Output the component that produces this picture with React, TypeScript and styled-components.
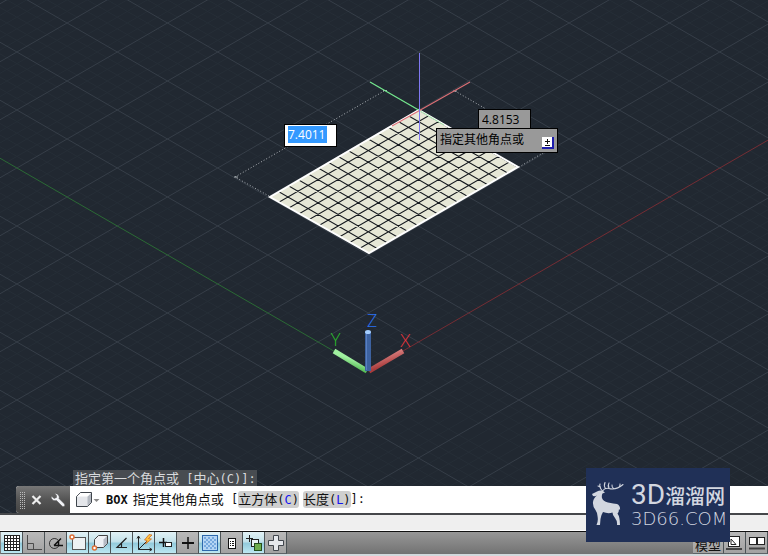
import React from "react";
import styled, { createGlobalStyle, css } from "styled-components";

const GlobalStyle = createGlobalStyle`
  *, *::before, *::after { box-sizing: border-box; }
  body {
    margin: 0;
    background: #212831;
    font-family: "Open Sans", "Noto Sans CJK SC", sans-serif;
  }
  button, input { font: inherit; color: inherit; margin: 0; }
`;

const Page = styled.div`
  display: flex;
  flex-direction: column;
  min-height: 100vh;
  position: relative;
  overflow: hidden;
`;

const Workspace = styled.main`
  position: relative;
  flex: 1;
  display: flex;
  flex-direction: column;
  justify-content: flex-end;
  align-items: flex-start;
  overflow: hidden;
  background: #212831;
  border-bottom: 2px solid #45474a;
`;

const SceneSvg = styled.svg`
  position: absolute;
  inset: 0;
  width: 100%;
  height: 100%;
`;

const AxisLabel = styled.text`
  font-family: "Lato", sans-serif;
  font-weight: 300;
  font-size: 17px;
`;

const floating = css<{ $x: number; $y: number }>`
  position: absolute;
  left: ${(p) => p.$x}px;
  top: ${(p) => p.$y}px;
  border: 1px solid #000;
  font-size: 12px;
  line-height: 16px;
`;

const Dimension = styled.label<{ $x: number; $y: number; $active?: boolean }>`
  ${floating}
  width: 53px;
  padding: ${(p) => (p.$active ? "1px 3px 3px" : "0 3px 2px")};
  background: ${(p) => (p.$active ? "#fff" : "#999")};
`;

const DimensionInput = styled.input<{ $active?: boolean }>`
  display: block;
  width: 39px;
  height: ${(p) => (p.$active ? 17 : 18)}px;
  padding: 0;
  border: 0;
  outline: 0;
  background: ${(p) => (p.$active ? "#3399ff" : "transparent")};
  color: ${(p) => (p.$active ? "#fff" : "#000")};
`;

const Prompt = styled.div<{ $x: number; $y: number }>`
  ${floating}
  display: flex;
  align-items: center;
  justify-content: space-between;
  width: 122px;
  height: 25px;
  padding: 0 3px 2px;
  background: #999;
  color: #000;
`;

const OptionsButton = styled.button`
  display: block;
  width: 12px;
  height: 12px;
  padding: 0;
  margin-top: 6px;
  border: 0;
  background: none;
  svg { display: block; }
`;

const History = styled.output`
  position: relative;
  margin-left: 73px;
  padding: 0 1px 0 2px;
  height: 16px;
  line-height: 16px;
  font-size: 13px;
  white-space: pre;
  background: #484c51;
  color: #d8dadc;
`;

const Mono = styled.span<{ $bold?: boolean; $color?: string }>`
  font-family: "DejaVu Sans Mono", monospace;
  font-size: 12px;
  font-weight: ${(p) => (p.$bold ? 700 : 400)};
  color: ${(p) => p.$color ?? "inherit"};
`;

const CommandBar = styled.section`
  position: relative;
  display: flex;
  align-self: stretch;
  height: 27px;
  margin-left: 16px;
  background: #fff;
  border-radius: 3px 0 0 3px;
  overflow: hidden;
`;

const CommandTools = styled.div`
  display: flex;
  align-items: center;
  width: 54px;
  padding-left: 4px;
  gap: 5px;
  background: linear-gradient(#777, #555 50%, #444);
`;

const ToolButton = styled.button`
  display: flex;
  padding: 0;
  border: 0;
  background: none;
`;

const CommandLine = styled.div`
  display: flex;
  align-items: center;
  padding-left: 4px;
  font-size: 13px;
  line-height: 17px;
  white-space: pre;
  color: #111;
`;

const RecentButton = styled(ToolButton)`
  margin-right: 6px;
`;

const CommandName = styled.strong`
  margin-right: 5px;
`;

const OptionChip = styled.button`
  height: 17px;
  padding: 0;
  border: 0;
  border-radius: 3px;
  background: #cfcfcf;
  line-height: 17px;
  & + & { margin-left: 4px; }
`;

const Tray = styled.div`
  height: 16px;
  background: #efefef;
  border-bottom: 1px solid #fff;
`;

const StatusBar = styled.footer`
  display: flex;
  justify-content: space-between;
  height: 25px;
  padding-left: 1px;
  border-top: 1px solid #111;
  border-bottom: 2px solid #d3d9dd;
  background: linear-gradient(#979797, #727272);
`;

const StatusGroup = styled.div`
  display: flex;
`;

const StatusButton = styled.button<{ $on?: boolean; $wide?: boolean }>`
  display: flex;
  align-items: center;
  justify-content: center;
  width: ${(p) => (p.$wide ? 31 : 22)}px;
  height: 22px;
  padding: ${(p) => (p.$wide ? "4px 0 0" : "0")};
  border: 0;
  border-right: 1px solid #4c5356;
  border-bottom: 1px solid #5d6366;
  font-size: 13px;
  line-height: 18px;
  white-space: nowrap;
  color: #111;
  background: ${(p) =>
    p.$on
      ? "linear-gradient(#e2f2f6, #c3e2ea 45%, #93cbdc 55%, #bde8f2)"
      : "linear-gradient(#b9b9b9, #a2a2a2)"};
  svg { display: block; }
`;

const Brand = styled.aside`
  position: absolute;
  right: 38px;
  bottom: 14px;
  display: flex;
  align-items: center;
  gap: 7px;
  width: 144px;
  height: 74px;
  padding-left: 5px;
  background: #203057;
  color: #d3d7e0;
`;

const BrandText = styled.div`
  display: flex;
  flex-direction: column;
  white-space: nowrap;
`;

const BrandName = styled.div`
  display: flex;
  align-items: center;
  height: 28px;
  font-family: "Noto Sans CJK SC", sans-serif;
  font-size: 20px;
  font-weight: 500;
`;

const BrandLatin = styled.span`
  font-family: Roboto, sans-serif;
  font-size: 28px;
  font-weight: 400;
  line-height: 28px;
`;

const BrandDomain = styled.div`
  font-family: "DejaVu Sans", sans-serif;
  font-size: 18px;
  font-weight: 200;
  line-height: 20px;
`;

const ORIGIN = { x: 368.3, y: 371 };
const CELL = { x: 10.04, y: 5.8 };
const REACH = 200;

function gridPath(from: number, to: number, skip: (i: number) => boolean) {
  let d = "";
  for (let i = from; i <= to; i++) {
    if (skip(i)) continue;
    const cx = ORIGIN.x + i * CELL.x;
    const cy = ORIGIN.y - i * CELL.y;
    d += `M${cx - REACH * CELL.x} ${cy - REACH * CELL.y}L${cx + REACH * CELL.x} ${cy + REACH * CELL.y}`;
    const bx = ORIGIN.x - i * CELL.x;
    d += `M${bx + REACH * CELL.x} ${cy - REACH * CELL.y}L${bx - REACH * CELL.x} ${cy + REACH * CELL.y}`;
  }
  return d;
}

const MINOR = gridPath(-120, 120, (i) => i % 5 === 0);
const MAJOR = gridPath(-120, 120, (i) => i % 5 !== 0 || i === 0);
const MESH = gridPath(-40, 40, () => false);
const FACE = "419,110 518,167 369,253 270,197";

function Scene() {
  return (
    <SceneSvg role="img" aria-label="Isometric model view" fill="none">
      <defs>
        <clipPath id="face">
          <polygon points={FACE} />
        </clipPath>
        <linearGradient id="rodX" x1="0" y1="0" x2="0.5" y2="1">
          <stop offset="0.3" stopColor="#d98080" />
          <stop offset="0.8" stopColor="#a83c3c" />
        </linearGradient>
        <linearGradient id="rodY" x1="0.5" y1="0" x2="0" y2="1">
          <stop offset="0.3" stopColor="#a0f0a0" />
          <stop offset="0.8" stopColor="#3ba83b" />
        </linearGradient>
      </defs>
      <path d={MINOR} stroke="#262e37" />
      <path d={MAJOR} stroke="#363e48" />
      <path d="M368.3 371L-1000 -419.5" stroke="#2b6a35" />
      <path d="M368.3 371L1968 -553" stroke="#752d34" />

      <polygon points={FACE} fill="#e6e7d6" />
      <g clipPath="url(#face)">
        <path d={MESH} stroke="#15191f" strokeWidth="1.1" />
      </g>
      <polygon points={FACE} stroke="#fff" strokeWidth="2" />

      <path
        d="M269 196L235 177L385 90.5M455 91L486 109M519 167L548 150"
        stroke="#aeb3b8"
        strokeDasharray="1 2"
      />
      <path d="M383 90.500h4M453 91h4M234 177h4" stroke="#a9b0b4" />
      <path d="M370 82L419.500 110.500" stroke="#72e88c" strokeWidth="1.2" />
      <path d="M419.500 110.500L444 125" stroke="#a5e6ab" />
      <path d="M470 82L419.500 110.500L392 126" stroke="#dc6f75" strokeWidth="1.2" />
      <rect x="419" y="53" width="1" height="87" fill="#7f78f0" />

      <path d="M369 371L403 351" stroke="url(#rodX)" strokeWidth="5" />
      <path d="M367 371L334 351" stroke="url(#rodY)" strokeWidth="5" />
      <path d="M368 332V371" stroke="#3d62a0" strokeWidth="6" />
      <path d="M366.500 332V370" stroke="#587fc0" strokeWidth="1" />
      <ellipse cx="368" cy="332" rx="3" ry="2" fill="#a5ceff" />
      <AxisLabel x="330.500" y="346" fill="#2cc22c">Y</AxisLabel>
      <AxisLabel x="400" y="347" fill="#f0363f">X</AxisLabel>
      <AxisLabel x="367" y="327" fill="#2a72f5">Z</AxisLabel>
    </SceneSvg>
  );
}

const Icon = ({ children, w = 20 }: { children: React.ReactNode; w?: number }) => (
  <svg width={w} height="20" viewBox={`0 0 ${w} 20`} fill="none" stroke="#222" aria-hidden="true">
    {children}
  </svg>
);

const Cube = () => (
  <>
    <path d="M2.500 6.500L6.500 2.500H17.500V12.500L13.500 16.500H2.500Z" fill="#e4e6ea" stroke="#3f454c" strokeLinejoin="round" />
    <path d="M13.500 6.500L17 3V12.500L13.500 16Z" fill="#b4b9c1" stroke="none" />
    <path d="M3 6.500L6.500 3H17L13.500 6.500Z" fill="#fff" stroke="none" />
  </>
);

const toggles: { label: string; on?: boolean; art: React.ReactNode }[] = [
  {
    label: "Grid display",
    on: true,
    art: (
      <>
        <rect x="2.500" y="2.500" width="15" height="15" fill="#fff" />
        <path d="M5.500 2V18M8.500 2V18M11.500 2V18M14.500 2V18M2 5.500H18M2 8.500H18M2 11.500H18M2 14.500H18" />
      </>
    ),
  },
  { label: "Ortho mode", art: <path d="M3.500 2V16.500H18M3.500 10.500H9.500V16.500" stroke="#4b4b4b" /> },
  {
    label: "Polar tracking",
    art: (
      <>
        <path d="M12 7A5 5 0 1 0 13 12.500" stroke="#333" />
        <path d="M8 12.500L15 5.500M8 12.500H17M12.500 8.500V12" strokeWidth="1.500" stroke="#111" />
      </>
    ),
  },
  {
    label: "Object snap",
    on: true,
    art: (
      <>
        <rect x="4.500" y="4.500" width="13" height="12" fill="#edf1f3" stroke="#555" />
        <circle cx="4" cy="4" r="2" fill="#fff" stroke="#dd7038" strokeWidth="1.500" />
      </>
    ),
  },
  {
    label: "3D object snap",
    on: true,
    art: (
      <>
        <path d="M4.500 6.500L8.500 2.500H17.500V10.500L13.500 14.500H4.500Z" fill="#edf0f4" stroke="#444" />
        <path d="M13.500 6.500L17 3V10.500L13.500 14Z" fill="#b5bac4" stroke="none" />
        <circle cx="4.500" cy="15" r="2" fill="#fff" stroke="#dd7038" strokeWidth="1.500" />
      </>
    ),
  },
  { label: "Object snap tracking", on: true, art: <path d="M14.500 5L5 14.500H15M9.500 10V14" strokeWidth="1.200" /> },
  {
    label: "Dynamic UCS",
    on: true,
    art: (
      <>
        <path d="M4.500 3V16.500H18M4.500 16.500L13 8M3 5.500L4.500 3L6 5.500M15.500 15L18 16.500L15.500 18" />
        <path d="M15 1.500L10.500 7L13 7.500L11.500 11L17.500 6L14.500 5.500L18 2Z" fill="#ffc23d" stroke="#c9631d" strokeWidth="0.700" />
      </>
    ),
  },
  {
    label: "Dynamic input",
    on: true,
    art: (
      <>
        <path d="M3 9.500H11M7.500 5V14" stroke="#111" strokeWidth="1.500" />
        <rect x="9.500" y="9.500" width="6" height="4" fill="#fff" />
      </>
    ),
  },
  {
    label: "Lineweight",
    art: (
      <>
        <path d="M4 10H16" stroke="#111" strokeWidth="2" />
        <path d="M10 4V16" stroke="#111" strokeWidth="1.500" />
      </>
    ),
  },
  {
    label: "Transparency",
    on: true,
    art: (
      <>
        <rect x="2.500" y="2.500" width="15" height="15" fill="#b4d5f4" stroke="#2d68ac" />
        <path
          d="M4 5H16M6 7H16M4 9H16M6 11H16M4 13H16M6 15H16"
          stroke="#76a9de"
          strokeWidth="2"
          strokeDasharray="2 2"
        />
      </>
    ),
  },
  {
    label: "Quick properties",
    art: (
      <>
        <rect x="6.500" y="5.500" width="7" height="10" fill="#fff" stroke="#111" />
        <path d="M8 8.500H9M10 8.500H12M8 10.500H9M10 10.500H12M8 12.500H9M10 12.500H12" stroke="#111" />
      </>
    ),
  },
  {
    label: "Selection cycling",
    on: true,
    art: (
      <>
        <path d="M2 5.500H9M5.500 2V9" stroke="#222" />
        <rect x="7.500" y="6.500" width="7" height="7" fill="#eaf4f6" stroke="#222" />
        <rect x="10.500" y="10.500" width="7" height="7" fill="#6eae4e" stroke="#24501f" />
      </>
    ),
  },
  {
    label: "Annotation monitor",
    art: <path d="M7.500 2.500H12.500V7.500H17.500V12.500H12.500V17.500H7.500V12.500H2.500V7.500H7.500Z" fill="#e5e8ec" stroke="#41464d" />,
  },
];

function Deer() {
  return (
    <svg width="33" height="48" viewBox="0 0 33 48" fill="#d3d7e0" aria-hidden="true">
      <path d="M1 13L6 10.500Q9 9 12 10L14 11.500L11.500 12.500Q10.500 14 11 17Q12 20 17 21.500Q23 22.500 26 23Q29.500 24.500 29 29L28 28Q28 31 26.500 32.500Q29 36 29 44H26Q26.500 40 24 37Q21.500 34.500 21.500 31.500Q17 33 12 31Q10 34 9.500 38L9 44H5.500Q7.500 40 6.500 35Q6 31 4.500 29Q1.500 25 2 21Q2.500 17 6 14.500Q4 15.500 2 15Z" />
      <path
        d="M11.500 10Q14 6.500 18 7.500Q25 9.500 32 3.500M11 9.500Q8 6 9 3M9.500 6L7 5M14.500 7.500Q12.500 5 14 1.500M18 7Q16.500 4.500 18 2M23 8Q20.500 6 21 4M28 6Q29.500 4 29 3"
        fill="none"
        stroke="#d3d7e0"
        strokeWidth="1.100"
        strokeLinecap="round"
      />
    </svg>
  );
}

export default function App() {
  return (
    <Page>
      <GlobalStyle />
      <Workspace>
        <Scene />
        <Dimension $x={284} $y={124} $active>
          <DimensionInput $active aria-label="Length" defaultValue="7.4011" />
        </Dimension>
        <Dimension $x={478} $y={109}>
          <DimensionInput aria-label="Width" defaultValue="4.8153" />
        </Dimension>
        <Prompt $x={436} $y={128}>
          指定其他角点或
          <OptionsButton aria-label="Options">
            <svg width="12" height="12" viewBox="0 0 12 12">
              <path d="M0 0H11V11H0Z" fill="#fff" />
              <path d="M11 0V11H0" fill="none" stroke="#1c1cac" strokeWidth="2" />
              <path d="M3 4.500H8M5.500 2V7M3 8.500H8" stroke="#111" />
            </svg>
          </OptionsButton>
        </Prompt>

        <History>
          指定第一个角点或<Mono> [</Mono>中心<Mono>(C)]:</Mono>
        </History>

        <CommandBar aria-label="Command line">
          <CommandTools>
            <svg width="5" height="18" viewBox="0 0 5 18" stroke="#bbb" aria-hidden="true">
              <path d="M0.500 1V18M2.500 1V18M4.500 1V18" strokeDasharray="1 1" />
            </svg>
            <ToolButton aria-label="Close">
              <svg width="14" height="14" viewBox="0 0 14 14">
                <path d="M2.500 3L10.500 11M10.500 3L2.500 11" stroke="#eee" strokeWidth="2.200" />
              </svg>
            </ToolButton>
            <ToolButton aria-label="Customize">
              <svg width="18" height="18" viewBox="0 0 18 18">
                <path
                  d="M5.500 2.500Q9 2 10 5Q10.500 6.500 10 7.500L15.500 13Q16.500 15 14.500 15.500Q13.500 15.500 13 15L7.500 9.500Q4 10.500 2.500 7.500Q2 6 2.500 5L5 7.500L7.500 6.500V4.500Z"
                  fill="#f1f2f6"
                  stroke="#555"
                  strokeWidth="0.500"
                />
              </svg>
            </ToolButton>
          </CommandTools>
          <CommandLine>
            <RecentButton aria-label="Recent commands">
              <Icon w={26}>
                <Cube />
                <path d="M19.500 9H25.500L22.500 12Z" fill="#888" stroke="none" />
              </Icon>
            </RecentButton>
            <CommandName>
              <Mono $bold>BOX</Mono>
            </CommandName>
            指定其他角点或<Mono> [</Mono>
            <OptionChip>
              立方体<Mono>(<Mono $color="#1414f0">C</Mono>)</Mono>
            </OptionChip>
            <OptionChip>
              长度<Mono>(<Mono $color="#1414f0">L</Mono>)</Mono>
            </OptionChip>
            <Mono>]:</Mono>
          </CommandLine>
        </CommandBar>
      </Workspace>

      <Tray />

      <StatusBar>
        <StatusGroup>
          {toggles.map((t) => (
            <StatusButton key={t.label} $on={t.on} aria-label={t.label} aria-pressed={!!t.on}>
              <Icon>{t.art}</Icon>
            </StatusButton>
          ))}
        </StatusGroup>
        <StatusGroup>
          <StatusButton $wide>模型</StatusButton>
          <StatusButton aria-label="Layout">
            <Icon>
              <rect x="3.500" y="3.500" width="11" height="10" fill="#fff" />
              <path d="M6 6V11.500H11Z" fill="#fff" />
              <path d="M1 16H17" strokeWidth="2" stroke="#444" />
            </Icon>
          </StatusButton>
          <StatusButton aria-label="Quick view layouts">
            <Icon>
              <rect x="2.500" y="4.500" width="7" height="7" fill="#fff" />
              <rect x="10.500" y="4.500" width="7" height="7" fill="#fff" />
              <path d="M2 15.500H18" strokeWidth="2" stroke="#444" />
            </Icon>
          </StatusButton>
        </StatusGroup>
      </StatusBar>

      <Brand>
        <Deer />
        <BrandText>
          <BrandName>
            <BrandLatin>3D</BrandLatin>溜溜网
          </BrandName>
          <BrandDomain>3D66.COM</BrandDomain>
        </BrandText>
      </Brand>
    </Page>
  );
}
